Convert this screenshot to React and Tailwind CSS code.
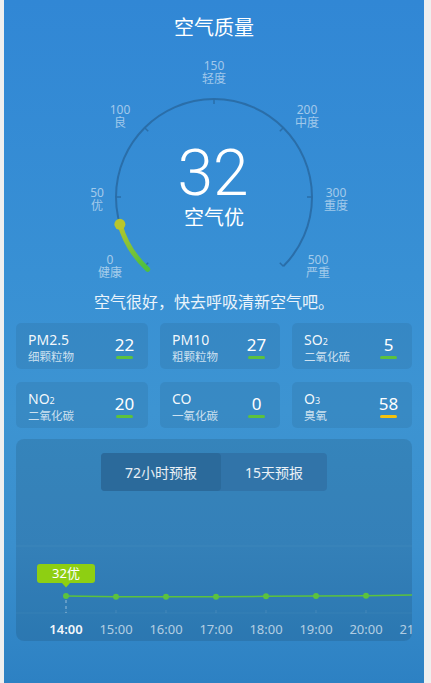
import React from "react";

const FONT = "font-['Noto_Sans','Noto_Sans_CJK_SC',sans-serif]";

const pollutants = [
  { name: "PM2.5", sub: "细颗粒物", value: 22, bar: "bg-[#5cc23d]" },
  { name: "PM10", sub: "粗颗粒物", value: 27, bar: "bg-[#5cc23d]" },
  { name: "SO", idx: "2", sub: "二氧化硫", value: 5, bar: "bg-[#5cc23d]" },
  { name: "NO", idx: "2", sub: "二氧化碳", value: 20, bar: "bg-[#5cc23d]" },
  { name: "CO", sub: "一氧化碳", value: 0, bar: "bg-[#5cc23d]" },
  { name: "O", idx: "3", sub: "臭氧", value: 58, bar: "bg-[#f4c20d]" },
];

const hours = ["14:00", "15:00", "16:00", "17:00", "18:00", "19:00", "20:00", "21:00"];
const ys = [105, 105.7, 105.7, 105.7, 105.3, 105, 104.7, 104];

// gauge geometry (panel coords)
const CX = 210;
const CY = 141;
const R = 98;
const pt = (deg, r = R) => {
  const a = (deg * Math.PI) / 180;
  return [CX + r * Math.cos(a), CY - r * Math.sin(a)];
};

const gaugeLabels = [
  { deg: 225, x: 106, y: 208, top: "0", bottom: "健康" },
  { deg: 180, x: 93, y: 141, top: "50", bottom: "优" },
  { deg: 135, x: 116, y: 58, top: "100", bottom: "良" },
  { deg: 90, x: 210, y: 14, top: "150", bottom: "轻度" },
  { deg: 45, x: 303, y: 58, top: "200", bottom: "中度" },
  { deg: 0, x: 332, y: 141, top: "300", bottom: "重度" },
  { deg: -45, x: 314, y: 208, top: "500", bottom: "严重" },
];

function Gauge() {
  const [sx, sy] = pt(225);
  const [ex, ey] = pt(-45);
  const valueDeg = 225 - (32 / 50) * 45;
  const [vx, vy] = pt(valueDeg);
  return (
    <div className="h-[228px]">
      <svg width="420" height="228" viewBox="0 0 420 228">
        <defs>
          <linearGradient id="aqi" gradientUnits="userSpaceOnUse" x1={vx} y1={vy} x2={sx} y2={sy}>
            <stop offset="0" stopColor="#b8c62c" />
            <stop offset="1" stopColor="#4fc03e" />
          </linearGradient>
        </defs>
        <path
          d={`M ${sx} ${sy} A ${R} ${R} 0 1 1 ${ex} ${ey}`}
          fill="none"
          stroke="#2a6ea9"
          strokeWidth="2"
        />
        {gaugeLabels.map((l) => {
          const [x1, y1] = pt(l.deg);
          const [x2, y2] = pt(l.deg, R - 5);
          return <line key={l.top} x1={x1} y1={y1} x2={x2} y2={y2} stroke="#2a6ea9" strokeWidth="1.5" />;
        })}
        <path
          d={`M ${vx} ${vy} A ${R} ${R} 0 0 0 ${sx + 3} ${sy + 3}`}
          fill="none"
          stroke="url(#aqi)"
          strokeWidth="5"
          strokeLinecap="round"
        />
        <circle cx={vx} cy={vy} r="5.5" fill="#b9c62b" />
        {gaugeLabels.map((l) => (
          <g key={"t" + l.top} fill="#ffffff" fillOpacity="0.55" fontSize="12" textAnchor="middle" fontFamily="'Noto Sans','Noto Sans CJK SC',sans-serif">
            <text x={l.x} y={l.y}>{l.top}</text>
            <text x={l.x} y={l.y + 13}>{l.bottom}</text>
          </g>
        ))}
        <text x="209" y="139" textAnchor="middle" fill="#fff" fontSize="64" fontWeight="300" fontFamily="Roboto,'Open Sans',sans-serif">
          32
        </text>
        <text x="210" y="169" textAnchor="middle" fill="#fff" fontSize="20" fontFamily="'Noto Sans CJK SC',sans-serif">
          空气优
        </text>
      </svg>
    </div>
  );
}

function PollutantCard({ p }) {
  return (
    <div className="h-[46px] rounded-[5px] bg-black/[0.065] flex justify-between pl-[12px] pr-[15px]">
      <div className="pt-[9px]">
        <div className="text-[14px] leading-[16px] text-white/95">
          {p.name}
          {p.idx && <span className="text-[9px] leading-none">{p.idx}</span>}
        </div>
        <div className="mt-[1px] text-[11.5px] leading-[16px] text-white/75">{p.sub}</div>
      </div>
      <div className="pt-[12px] flex flex-col items-center w-[17px]">
        <div className="text-[17px] leading-[20px] text-white">{p.value}</div>
        <div className={`mt-[1px] h-[3px] w-[17px] rounded-full ${p.bar}`} />
      </div>
    </div>
  );
}

function Forecast() {
  const line = hours.map((h, i) => `${i === 0 ? "M" : "L"} ${50 + i * 50} ${ys[i]}`).join(" ");
  return (
    <div className="mt-[11px] mx-[12px] h-[202px] rounded-[8px] bg-black/[0.1] overflow-hidden">
      <div className="pt-[14px] flex justify-center">
        <div className="flex h-[38px] rounded-[4px] bg-[#3174a9] text-[14px] text-white/90">
          <div className="px-[24px] flex items-center rounded-[4px] bg-[#2b6a9b]">72小时预报</div>
          <div className="px-[24px] flex items-center">15天预报</div>
        </div>
      </div>
      <svg width="396" height="150" viewBox="0 0 396 150" className="block">
        <line x1="0" y1="55" x2="396" y2="55" stroke="#ffffff" strokeOpacity="0.05" />
        <line x1="0" y1="122" x2="396" y2="122" stroke="#ffffff" strokeOpacity="0.05" />
        {hours.map((h, i) => (
          <line key={"k" + h} x1={50 + i * 50} y1="119" x2={50 + i * 50} y2="122" stroke="#ffffff" strokeOpacity="0.1" />
        ))}
        <line x1="50" y1="109" x2="50" y2="122" stroke="#ffffff" strokeOpacity="0.5" strokeDasharray="3 3" />
        <path d={`${line} L 400 103.5`} fill="none" stroke="#5cc23d" strokeWidth="1.5" />
        {hours.map((h, i) => (
          <circle key={"c" + h} cx={50 + i * 50} cy={ys[i]} r="3" fill="#5cc23d" />
        ))}
        <rect x="21" y="73" width="58" height="19" rx="3" fill="#8ecf12" />
        <path d="M 46 92 L 50 96.5 L 54 92 Z" fill="#8ecf12" />
        <text x="50" y="87" textAnchor="middle" fill="#fff" fontSize="13" fontFamily="'Noto Sans','Noto Sans CJK SC',sans-serif">
          32优
        </text>
        {hours.map((h, i) => (
          <text
            key={"t" + h}
            x={50 + i * 50}
            y="143"
            textAnchor="middle"
            fontSize="13"
            fill="#ffffff"
            fillOpacity={i === 0 ? 0.95 : 0.65}
            fontWeight={i === 0 ? 600 : 400}
            fontFamily="'Noto Sans',sans-serif"
          >
            {h}
          </text>
        ))}
      </svg>
    </div>
  );
}

export default function App() {
  return (
    <div className={`w-[431px] h-[683px] bg-[#efefef] pl-[4px] ${FONT}`}>
      <div className="w-[420px] h-[683px] overflow-hidden bg-[linear-gradient(180deg,#3187d5_0%,#3890d4_40%,#3d94d2_60%,#3a8fcd_80%,#2d81c3_100%)]">
        <div className="h-[56px] flex items-center justify-center text-[20px] text-white">空气质量</div>
        <Gauge />
        <div className="h-[36px] flex items-center justify-center text-[16px] text-white/90">
          空气很好，快去呼吸清新空气吧。
        </div>
        <div className="mt-[3px] mx-[12px] grid grid-cols-[132px_120px_120px] gap-x-[12px] gap-y-[13px]">
          {pollutants.map((p) => (
            <PollutantCard key={p.name + p.sub} p={p} />
          ))}
        </div>
        <Forecast />
      </div>
    </div>
  );
}
